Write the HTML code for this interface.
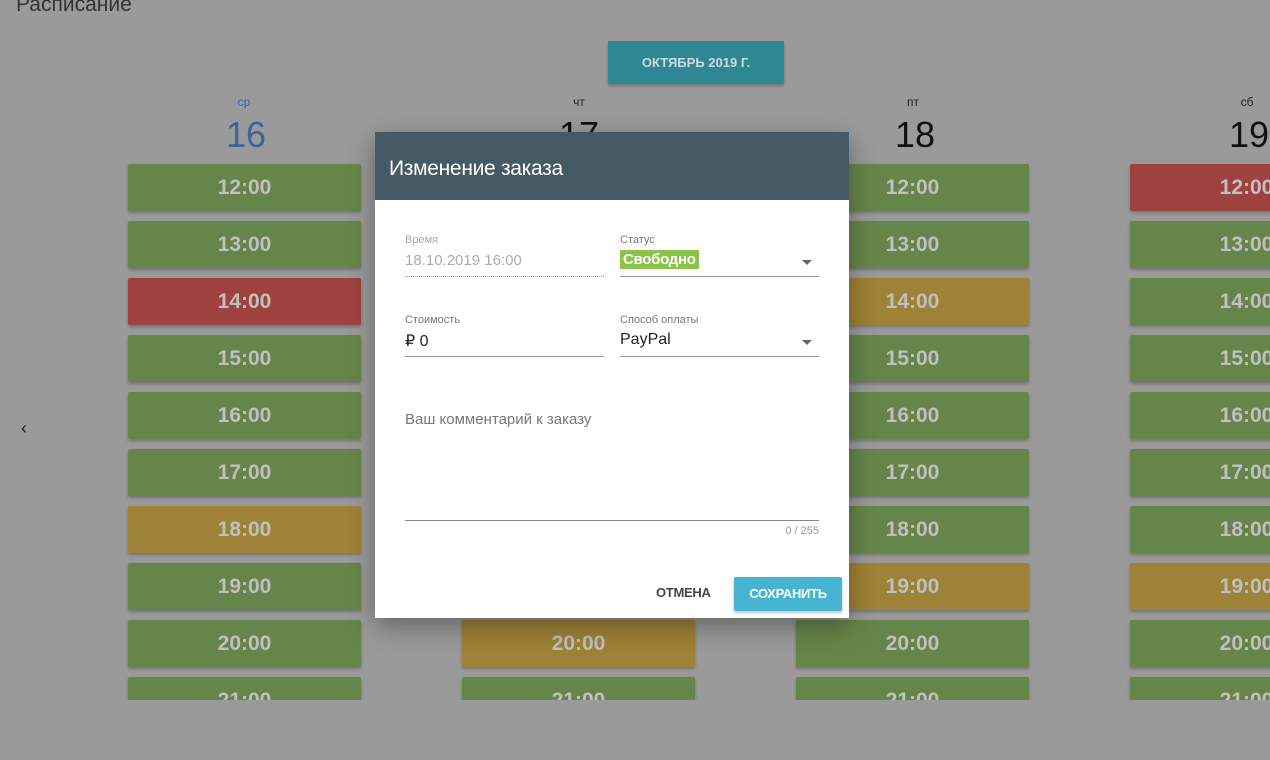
<!DOCTYPE html>
<html><head><meta charset="utf-8"><style>
*{box-sizing:border-box;margin:0;padding:0}
body{width:1270px;height:760px;overflow:hidden;background:#9a9a9a;font-family:"Liberation Sans","Noto Sans CJK SC",sans-serif;position:relative}
.abs{position:absolute}
.slot{position:absolute;width:233px;height:47px;border-radius:2px;color:#c0c0c0;font-size:21px;font-weight:bold;text-align:center;line-height:47px;box-shadow:0 2px 3px rgba(0,0,0,.25)}
.g{background:#66854a}.r{background:#9e423f}.y{background:#9e8237}
.dw{position:absolute;width:200px;text-align:center;font-size:12px;color:#222}
.dn{position:absolute;width:200px;text-align:center;font-size:36px;color:#111}
.lbl{font-size:12px;color:#888}
</style></head><body>
<div class="abs" style="left:16px;top:-7px;font-size:21px;color:#333">Расписание</div>
<div class="abs" style="left:608px;top:41px;width:176px;height:43px;background:#2f8794;color:#c8dde0;font-size:13px;font-weight:bold;text-align:center;line-height:43px;box-shadow:0 2px 3px rgba(0,0,0,.25)">ОКТЯБРЬ 2019 Г.</div>
<div class="abs" style="left:21px;top:418px;font-size:18px;color:#222">‹</div>
<div class="dw" style="left:144px;top:95px;color:#3c63a0">ср</div><div class="dn" style="left:146px;top:114px;color:#3c63a0">16</div>
<div class="dw" style="left:479px;top:95px">чт</div><div class="dn" style="left:479px;top:114px">17</div>
<div class="dw" style="left:813px;top:95px">пт</div><div class="dn" style="left:815px;top:114px">18</div>
<div class="dw" style="left:1147px;top:95px">сб</div><div class="dn" style="left:1149px;top:114px">19</div>
<div id="slots"></div>
<div class="abs" style="left:0;top:700px;width:1270px;height:60px;background:#9a9a9a"></div>
<div class="abs" style="left:375px;top:132px;width:474px;height:486px;background:#fff;box-shadow:0 8px 24px rgba(0,0,0,.35)">
 <div style="height:68px;background:#455a64;color:#fff;font-size:21px;padding:25px 0 0 14px;letter-spacing:-0.3px">Изменение заказа</div>
 <div class="abs lbl" style="left:30px;top:102px;font-size:11px;color:#aaa">Время</div>
 <div class="abs" style="left:30px;top:120px;font-size:15px;color:#aaa">18.10.2019 16:00</div>
 <div class="abs" style="left:30px;top:144px;width:199px;border-top:1px dotted #999"></div>
 <div class="abs lbl" style="left:245px;top:102px;font-size:11px;color:#777">Статус</div>
 <div class="abs" style="left:245px;top:118px;background:#8bc34a;color:#fff;font-size:15px;font-weight:bold;padding:1px 3px;letter-spacing:-0.3px">Свободно</div>
 <div class="abs" style="left:427px;top:128px;border:5px solid transparent;border-top-color:#666"></div>
 <div class="abs" style="left:245px;top:144px;width:199px;border-top:1px solid #999"></div>
 <div class="abs lbl" style="left:30px;top:182px;font-size:11px;color:#777">Стоимость</div>
 <div class="abs" style="left:30px;top:199px;font-size:16px;color:#222">₽ 0</div>
 <div class="abs" style="left:30px;top:224px;width:199px;border-top:1px solid #999"></div>
 <div class="abs lbl" style="left:245px;top:182px;font-size:11px;color:#777">Способ оплаты</div>
 <div class="abs" style="left:245px;top:199px;font-size:16px;color:#222">PayPal</div>
 <div class="abs" style="left:427px;top:208px;border:5px solid transparent;border-top-color:#666"></div>
 <div class="abs" style="left:245px;top:224px;width:199px;border-top:1px solid #999"></div>
 <div class="abs" style="left:30px;top:279px;font-size:15px;color:#777">Ваш комментарий к заказу</div>
 <div class="abs" style="left:30px;top:388px;width:414px;border-top:1px solid #888"></div>
 <div class="abs" style="left:380px;top:393px;width:64px;text-align:right;font-size:11px;color:#999">0 / 255</div>
 <div class="abs" style="left:281px;top:453px;font-size:13px;font-weight:bold;color:#444;letter-spacing:-0.3px">ОТМЕНА</div>
 <div class="abs" style="left:359px;top:445px;width:108px;height:34px;background:#45b4d0;color:#fff;font-size:13px;font-weight:bold;text-align:center;line-height:34px;border-radius:2px;box-shadow:0 2px 3px rgba(0,0,0,.25);letter-spacing:-0.3px">СОХРАНИТЬ</div>
</div>
<script>
var cols=[[128,"ggrgggyggg"],[462,"ggggggggyg"],[796,"ggyggggygg"],[1130,"rggggggygg"]];
var h="";
cols.forEach(function(c){for(var i=0;i<10;i++){h+='<div class="slot '+c[1][i]+'" style="left:'+c[0]+'px;top:'+(164+57*i)+'px">'+(12+i)+':00</div>';}});
document.getElementById("slots").innerHTML=h;
</script>
</body></html>
